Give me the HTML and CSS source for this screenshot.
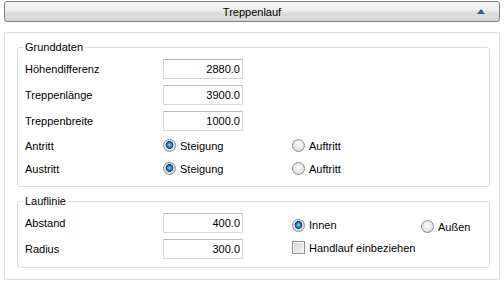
FILE: index.html
```html
<!DOCTYPE html>
<html lang="de">
<head>
  <meta charset="UTF-8">
  <title>Treppenlauf</title>
  <link rel="stylesheet" href="styles.css">
</head>
<body>
<div class="header">
  <span></span>
  <span class="title">Treppenlauf</span>
  <span class="collapse"></span>
</div>
<div class="panel">
  <!-- Grunddaten -->
  <fieldset class="group">
    <legend>Grunddaten</legend>
    <div class="row">
      <label>Höhendifferenz</label>
      <input class="num" type="text" value="2880.0">
    </div>
    <div class="row">
      <label>Treppenlänge</label>
      <input class="num" type="text" value="3900.0">
    </div>
    <div class="row">
      <label>Treppenbreite</label>
      <input class="num" type="text" value="1000.0">
    </div>
    <div class="row short">
      <label>Antritt</label>
      <span class="opt"><span class="radio checked"></span>Steigung</span>
      <span class="opt"><span class="radio"></span>Auftritt</span>
    </div>
    <div class="row short">
      <label>Austritt</label>
      <span class="opt"><span class="radio checked"></span>Steigung</span>
      <span class="opt"><span class="radio"></span>Auftritt</span>
    </div>
  </fieldset>
  <!-- Lauflinie -->
  <fieldset class="group second">
    <legend>Lauflinie</legend>
    <div class="lines">
      <div class="row">
        <label>Abstand</label>
        <input class="num" type="text" value="400.0">
      </div>
      <div class="row">
        <label>Radius</label>
        <input class="num" type="text" value="300.0">
      </div>
      <div class="side">
        <span class="opt"><span class="radio checked"></span>Innen</span>
        <span class="opt outer"><span class="radio"></span>Außen</span>
        <span class="opt wide"><span class="check"></span>Handlauf einbeziehen</span>
      </div>
    </div>
  </fieldset>
</div>
</body>
</html>
```

FILE: styles.css
```css
body {
  margin: 0;
  font-family: 'Liberation Sans', Arial, sans-serif;
  font-size: 11px;
  color: #000;
  background: #fff;
}
.header {
  margin: 1px 4px 0;
  height: 21px;
  box-sizing: border-box;
  border: 1px solid #7f7f7f;
  border-radius: 3px;
  background: linear-gradient(#f5f5f5, #ececec 45%, #dedede 55%, #d6d6d6);
  display: grid;
  grid-template-columns: 1fr auto 1fr;
  align-items: center;
}
.title {
  font-size: 11px;
  line-height: 14px;
}
.collapse {
  justify-self: end;
  margin-right: 14px;
  width: 0;
  height: 0;
  border-left: 4.5px solid transparent;
  border-right: 4.5px solid transparent;
  border-bottom: 5px solid #2b5c8d;
}
.panel {
  margin: 10px 4px 0;
  border: 1px solid #d3dde5;
  border-radius: 3px;
  padding: 7px 9px 11px 12px;
}
.group {
  margin: 0;
  min-width: 0;
  border: 1px solid #d3dde5;
  border-radius: 3px;
  padding: 2px 0 6px 7px;
}
.group.second {
  margin-top: 7px;
  padding-bottom: 5px;
}
.group legend {
  padding: 0 2px;
  margin-left: -2px;
  line-height: 14px;
}
.row {
  display: grid;
  grid-template-columns: 138px 129px 1fr;
  align-items: center;
  height: 26px;
}
.row.short { height: 23px; }
.num {
  width: 80px;
  height: 20px;
  box-sizing: border-box;
  margin: 0;
  border: 1px solid #d2d6db;
  border-top-color: #b5b9be;
  border-radius: 1px;
  padding: 0 2px;
  text-align: right;
  font-family: 'Liberation Sans', Arial, sans-serif;
  font-size: 11px;
  color: #000;
  background: #fff;
}
.opt {
  display: flex;
  align-items: center;
  gap: 4px;
  white-space: nowrap;
}
.radio {
  width: 13px;
  height: 13px;
  box-sizing: border-box;
  border-radius: 50%;
  border: 1px solid #8c8e90;
  background: radial-gradient(circle at 50% 40%, #fdfdfd, #e6e6e6 55%, #cfcfcf);
  flex: none;
}
.radio.checked {
  background:
    radial-gradient(circle at 50% 45%, #a8e4ff 0, #3a9ad8 1.5px, #1a5f99 3px, #0f3f6e 3.6px, transparent 4.2px),
    radial-gradient(circle at 50% 40%, #fdfdfd, #e6e6e6 55%, #cfcfcf);
}
.check {
  width: 13px;
  height: 13px;
  box-sizing: border-box;
  border: 1px solid #8c8e90;
  box-shadow: inset 0 0 0 1px #f6f6f6;
  background: linear-gradient(135deg, #cfcfcf, #f4f4f4);
  flex: none;
}
.lines {
  display: grid;
  grid-template-columns: 267px 1fr;
}
.lines .row {
  grid-column: 1;
  grid-template-columns: 138px 129px;
}
.side {
  grid-column: 2;
  grid-row: 1 / span 2;
  display: grid;
  grid-template-columns: 129px auto;
  align-content: start;
  row-gap: 8px;
  padding-top: 7px;
}
.side .outer { margin-top: 3px; }
.side .wide { grid-column: 1 / span 2; }
```
